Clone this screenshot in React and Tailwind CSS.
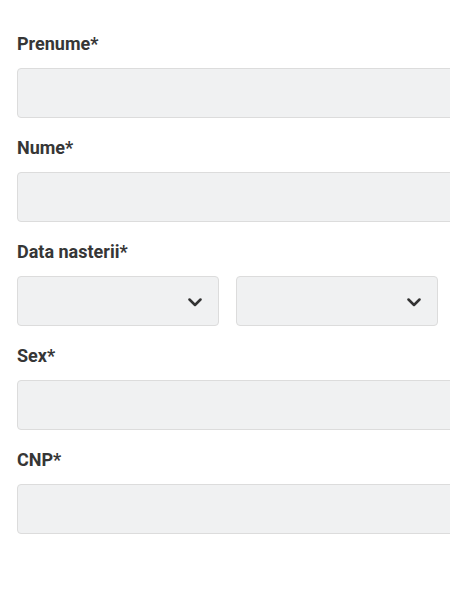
import React from "react";

function Label({ children }) {
  return (
    <div className="h-6 text-[18px] leading-6 font-bold text-[#363636]">
      {children}
    </div>
  );
}

function TextField({ label }) {
  return (
    <div className="flex flex-col">
      <Label>{label}</Label>
      <div className="mt-3 h-[50px] w-[460px] rounded-[4px] border border-[#dcdcdc] bg-[#f0f1f2]" />
    </div>
  );
}

function Select() {
  return (
    <div className="flex h-[50px] w-[202px] items-center justify-end rounded-[4px] border border-[#dcdcdc] bg-[#f0f1f2] pr-[16px]">
      <svg width="14" height="9" viewBox="0 0 14 9" fill="none" className="mt-[2px]">
        <path d="M1.5 1.5L7 7L12.5 1.5" stroke="#333333" strokeWidth="2.5" strokeLinecap="round" strokeLinejoin="round" />
      </svg>
    </div>
  );
}

export default function App() {
  return (
    <div
      className="h-[600px] w-[450px] overflow-hidden bg-white pl-[17px] pt-[32px]"
      style={{ fontFamily: "Roboto, 'Liberation Sans', sans-serif" }}
    >
      <div className="flex flex-col gap-[18px]">
        <TextField label="Prenume*" />
        <TextField label="Nume*" />
        <div className="flex flex-col">
          <Label>Data nasterii*</Label>
          <div className="mt-3 flex gap-[17px]">
            <Select />
            <Select />
          </div>
        </div>
        <TextField label="Sex*" />
        <TextField label="CNP*" />
      </div>
    </div>
  );
}
